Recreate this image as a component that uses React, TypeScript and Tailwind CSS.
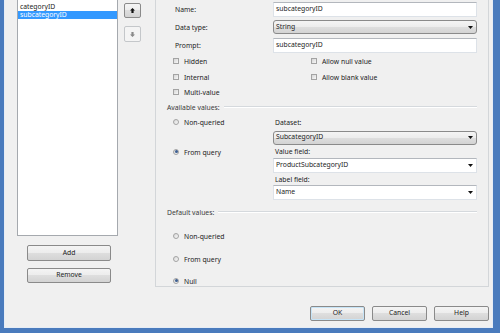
import React from "react";

const face =
  "flex items-center rounded-[2px] border border-[#8a8a8a] bg-[linear-gradient(#f4f4f4,#ececec_50%,#dedede_50%,#d3d3d3)] text-[#1b1b1b]";
const button = `${face} justify-center`;

const textBox =
  "flex items-center h-[15px] pl-[2px] bg-white border border-[#dde2e8] border-t-[#b3b7bd]";

// labels sit a pixel low, like the reference
const label = "pt-[2px]";

function Arrow({ color = "#111" }: { color?: string }) {
  return (
    <svg width="5" height="3" viewBox="0 0 5 3">
      <polygon points="0,0 5,0 2.5,3" fill={color} />
    </svg>
  );
}

function Check({ text }: { text: string }) {
  return (
    <div className="flex items-center gap-[5px]">
      <span className="w-[6px] h-[6px] border border-[#a3a3a3] bg-[linear-gradient(135deg,#d6d6d6,#f7f7f7)]" />
      <span className={label}>{text}</span>
    </div>
  );
}

function Radio({ text, checked = false }: { text: string; checked?: boolean }) {
  return (
    <div className="flex items-center gap-[5px]">
      <span className="w-[6px] h-[6px] rounded-full border border-[#a3a3a3] bg-[linear-gradient(135deg,#d9d9d9,#f8f8f8)] flex items-center justify-center">
        {checked && <span className="w-[3px] h-[3px] rounded-full bg-[#3d5f92]" />}
      </span>
      <span className={label}>{text}</span>
    </div>
  );
}

function Section({ title }: { title: string }) {
  return (
    <div className="flex items-center gap-[4px] pl-[11px] pr-[11px]">
      <span className={`${label} text-[#3a3a3a]`}>{title}</span>
      <span className="flex-1 border-t border-[#d5d9dd] border-b-white border-b" />
    </div>
  );
}

function DropDown({ value }: { value: string }) {
  return (
    <div className={`${face} h-[14px] justify-between pl-[2px] pr-[3px] rounded-[3px]`}>
      <span>{value}</span>
      <Arrow />
    </div>
  );
}

function Combo({ value }: { value: string }) {
  return (
    <div className={`${textBox} justify-between pr-[3px]`}>
      <span>{value}</span>
      <Arrow />
    </div>
  );
}

export default function App() {
  return (
    <div className="w-[500px] h-[333px] overflow-hidden bg-[#4a7bbd] pl-[4px] pr-[7px] pb-[5px] font-['Noto_Sans',sans-serif] text-[6.8px] leading-none text-[#1b1b1b]">
      <div className="h-full flex flex-col bg-[#f0f0f0] border-l border-r border-b border-[#e6edf6]">
        <div className="flex h-[287px] shrink-0">
          {/* Parameter list */}
          <div className="w-[150px] flex flex-col">
            <div className="flex">
              <div className="ml-[12px] w-[101px] h-[236px] bg-white border-x border-b border-[#a5a9ae] pt-[3px]">
                <div className="h-[8px] pl-[2px] flex items-center">categoryID</div>
                <div className="h-[8px] pl-[2px] flex items-center bg-[#3399ff] text-white">subcategoryID</div>
              </div>
              <div className="ml-[6px] flex flex-col gap-[8px] pt-[3px]">
                <div className={`${button} w-[17px] h-[15px]`}>
                  <svg width="5" height="5" viewBox="0 0 5 5">
                    <polygon points="2.5,0 5,2.5 3.6,2.5 3.6,5 1.4,5 1.4,2.5 0,2.5" fill="#111" />
                  </svg>
                </div>
                <div className="flex items-center justify-center w-[17px] h-[16px] rounded-[2px] border border-[#c4c7ca] bg-[#f4f4f4]">
                  <svg width="5" height="5" viewBox="0 0 5 5">
                    <polygon points="1.4,0 3.6,0 3.6,2.5 5,2.5 2.5,5 0,2.5 1.4,2.5" fill="#8a8a8a" />
                  </svg>
                </div>
              </div>
            </div>
            <div className={`${button} ml-[22px] mt-[9px] w-[84px] h-[16px]`}>Add</div>
            <div className={`${button} ml-[22px] mt-[7px] w-[84px] h-[15px]`}>Remove</div>
          </div>

          {/* Properties panel */}
          <div className="w-[334px] mr-[2px] border-x border-b border-[#d3d6d9] flex flex-col">
            <div className="h-[18px] shrink-0 flex items-center pl-[19px] pr-[11px]">
              <span className={`${label} w-[98px]`}>Name:</span>
              <div className={`${textBox} flex-1`}>subcategoryID</div>
            </div>
            <div className="h-[18px] shrink-0 flex items-center pl-[19px] pr-[11px]">
              <span className={`${label} w-[98px]`}>Data type:</span>
              <div className="flex-1">
                <DropDown value="String" />
              </div>
            </div>
            <div className="h-[18px] shrink-0 flex items-center pl-[19px] pr-[11px]">
              <span className={`${label} w-[98px]`}>Prompt:</span>
              <div className={`${textBox} flex-1`}>subcategoryID</div>
            </div>
            <div className="h-[15px] shrink-0 flex items-center pl-[17px]">
              <div className="w-[138px]">
                <Check text="Hidden" />
              </div>
              <Check text="Allow null value" />
            </div>
            <div className="h-[16px] shrink-0 flex items-center pl-[17px]">
              <div className="w-[138px]">
                <Check text="Internal" />
              </div>
              <Check text="Allow blank value" />
            </div>
            <div className="h-[15px] shrink-0 flex items-center pl-[17px]">
              <Check text="Multi-value" />
            </div>
            <div className="h-[14px] shrink-0 flex flex-col justify-center">
              <Section title="Available values:" />
            </div>

            <div className="h-[86px] shrink-0 flex pr-[11px]">
              <div className="w-[117px] pl-[17px] flex flex-col">
                <div className="h-[16px] flex items-center">
                  <Radio text="Non-queried" />
                </div>
                <div className="h-[15px]" />
                <div className="h-[14px] flex items-center">
                  <Radio text="From query" checked />
                </div>
              </div>
              <div className="flex-1 flex flex-col">
                <div className="h-[16px] flex items-center pl-[2px]">
                  <span className={label}>Dataset:</span>
                </div>
                <div className="h-[15px] flex items-center">
                  <div className="flex-1">
                    <DropDown value="SubcategoryID" />
                  </div>
                </div>
                <div className="h-[13px] flex items-center pl-[2px]">
                  <span className={label}>Value field:</span>
                </div>
                <Combo value="ProductSubcategoryID" />
                <div className="h-[12px] flex items-center pl-[2px]">
                  <span className={label}>Label field:</span>
                </div>
                <Combo value="Name" />
              </div>
            </div>

            <div className="h-[24px] shrink-0 flex flex-col justify-center">
              <Section title="Default values:" />
            </div>
            <div className="pl-[17px] pt-[7px] flex flex-col">
              <div className="h-[10px] flex items-center">
                <Radio text="Non-queried" />
              </div>
              <div className="h-[10px] mt-[13px] flex items-center">
                <Radio text="From query" />
              </div>
              <div className="h-[10px] mt-[12px] flex items-center">
                <Radio text="Null" checked />
              </div>
            </div>
          </div>
        </div>

        {/* Dialog buttons */}
        <div className="flex-1 flex justify-end items-start gap-[7px] pt-[19px] pr-[3px]">
          <div className={`${button} w-[55px] h-[15px] border-[#3c7fb1] shadow-[inset_0_0_0_1px_#c6e4f7]`}>OK</div>
          <div className={`${button} w-[55px] h-[15px]`}>Cancel</div>
          <div className={`${button} w-[55px] h-[15px]`}>Help</div>
        </div>
      </div>
    </div>
  );
}
